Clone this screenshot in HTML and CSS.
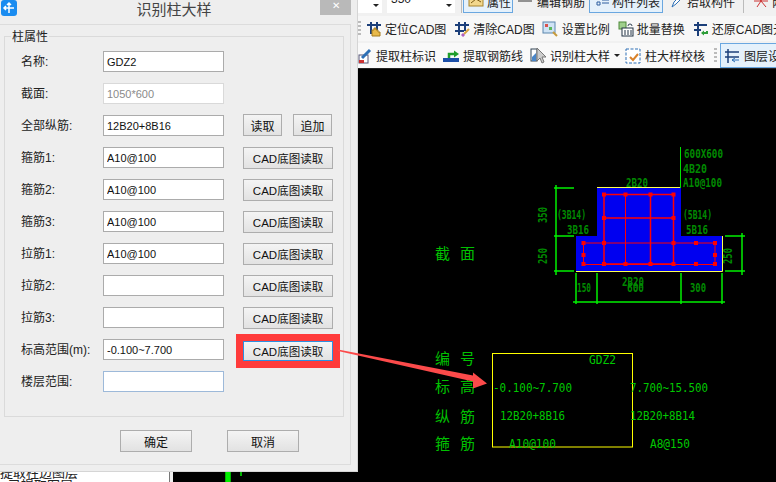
FILE: index.html
```html
<!DOCTYPE html>
<html lang="zh-CN">
<head>
<meta charset="UTF-8">
<title>识别柱大样</title>
<link rel="stylesheet" href="styles.css">
</head>
<body>
<div class="app">
    <div class="toolbars">
        <div class="bar bar-top">
            <span class="combo combo-a"><span class="combo-arrow"></span></span>
            <span class="combo combo-b">350<span class="combo-arrow"></span></span>
            <span class="sep"></span>
            <span class="tool tool-on tool-attr">
                <svg class="ico" viewBox="0 0 16 16"><rect x="1" y="3" width="14" height="10" fill="#f2d78c" stroke="#a8842c"/><path d="M3 10l5-4 5 3" stroke="#7a5a14" fill="none"/></svg>属性
            </span>
            <span class="tool tool-edit">
                <svg class="ico" viewBox="0 0 16 16"><path d="M1 8h14M4 5h9" stroke="#333" fill="none"/></svg>编辑钢筋
            </span>
            <span class="tool tool-on tool-list">
                <svg class="ico" viewBox="0 0 16 16"><path d="M2 3h3v3H2zM2 9h3v3H2zM7 4h7M7 7h7M7 10h7" stroke="#2f5f9f" fill="none"/></svg>构件列表
            </span>
            <span class="tool tool-pick">
                <svg class="ico" viewBox="0 0 16 16"><path d="M3 14l2-5 7-7 2 2-7 7z" fill="#fff" stroke="#2d6fb5"/></svg>拾取构件
            </span>
            <span class="sep sep-end"></span>
            <span class="tool tool-two">
                <svg class="ico" viewBox="0 0 16 16"><path d="M3 2l10 12M12 2L4 14M1 8h14" stroke="#c33" fill="none"/></svg>两点
            </span>
        </div>

        <div class="bar bar-cad">
            <span class="grip"></span>
            <span class="tool tool-a">
                <svg class="ico" viewBox="0 0 16 16"><path d="M5 1v12M11 1v12M1 4h14" stroke="#1c3f7a" stroke-width="2" fill="none"/><path d="M6 15V9h2V7h2v2h2v2h2v4z" fill="#e8b94a" stroke="#a67c1e"/></svg>定位CAD图
            </span>
            <span class="tool tool-b">
                <svg class="ico" viewBox="0 0 16 16"><path d="M5 1v13M11 1v9M1 4h14M1 10h9" stroke="#1c3f7a" stroke-width="2" fill="none"/><path d="M15 8l-5 5" stroke="#d9a441" stroke-width="2"/><path d="M10 13l-2 2" stroke="#b05fc0" stroke-width="3"/></svg>清除CAD图
            </span>
            <span class="tool tool-c">
                <svg class="ico" viewBox="0 0 16 16"><rect x="1" y="1" width="12" height="11" fill="#cfe3f5" stroke="#5b86ad"/><rect x="3" y="3" width="3" height="3" fill="#d9534f"/><rect x="7" y="6" width="3" height="3" fill="#5cb85c"/><path d="M11 11l4 4" stroke="#c89b3c" stroke-width="2"/></svg>设置比例
            </span>
            <span class="tool tool-d">
                <svg class="ico" viewBox="0 0 16 16"><rect x="1" y="1" width="7" height="7" fill="#9fcf8c" stroke="#4e8a3a"/><rect x="4" y="7" width="11" height="8" fill="#fff" stroke="#234"/><path d="M7 9v5M10 9v5M13 9v5" stroke="#234"/><path d="M10 5a2 2 0 0 1 4 0" fill="none" stroke="#345"/></svg>批量替换
            </span>
            <span class="tool tool-e">
                <svg class="ico" viewBox="0 0 16 16"><path d="M5 1v14M1 4h13M1 9h7" stroke="#1c3f7a" stroke-width="2" fill="none"/><path d="M9 12h5v-2" stroke="#2e9e3a" stroke-width="2" fill="none"/><path d="M11 9.500v5l-3-2.500z" fill="#2e9e3a"/></svg>还原CAD图元
            </span>
        </div>

        <div class="bar bar-column">
            <span class="tool tool-f">
                <svg class="ico" viewBox="0 0 16 16"><rect x="1" y="7" width="9" height="8" fill="#fff" stroke="#557"/><rect x="1" y="12" width="5" height="3" fill="#c33"/><path d="M4 10l8-8" stroke="#2d6fb5" stroke-width="3"/></svg>提取柱标识
            </span>
            <span class="tool tool-g">
                <svg class="ico" viewBox="0 0 16 16"><rect x="0" y="10" width="16" height="4" fill="#1c4fa8"/><path d="M6 10V6h6" stroke="#1f9e2c" stroke-width="2.500" fill="none"/><path d="M11 2.500L16 6l-5 3.500z" fill="#1f9e2c"/></svg>提取钢筋线
            </span>
            <span class="tool tool-h">
                <svg class="ico ico-cursor" viewBox="0 0 18 18"><rect x="1" y="2" width="6" height="12" fill="#fff" stroke="#345"/><path d="M2 10l4-4v8H2z" fill="#4a86c8"/><path d="M7 1l9 9h-4l2 5-2 1-2-5-3 3z" fill="#ccc" stroke="#777"/></svg>识别柱大样<span class="caret"></span>
            </span>
            <span class="tool tool-i">
                <svg class="ico" viewBox="0 0 16 16"><rect x="1" y="1" width="14" height="14" fill="#fff" stroke="#2d6fb5" stroke-dasharray="3 1.500"/><path d="M5 9l3 3 5-6" stroke="#d9822b" stroke-width="2" fill="none"/></svg>柱大样校核
            </span>
            <span class="grip grip-layer"></span>
            <span class="tool tool-on tool-layer">
                <svg class="ico" viewBox="0 0 16 16"><path d="M4 1v14M1 4h14M1 9h14" stroke="#1c3f7a" stroke-width="1.500" fill="none"/><path d="M15 12H8" stroke="#2d6fb5"/><path d="M11 10l-3 2 3 2" stroke="#2d6fb5" fill="none"/></svg>图层设置
            </span>
        </div>
    </div>

    <div class="workspace">
        <div class="side-panel">
            <div class="side-item">提取柱边图层</div>
            <div class="side-item side-indent">已提取图层</div>
        </div>
        <svg class="cad" viewBox="173 69 603 413" xmlns="http://www.w3.org/2000/svg">
            <!-- 柱截面 -->
            <path class="section" d="M597 188H681V236H723V271H576V236H597Z"/>
            <path class="outline" d="M597 187.500H681M722.500 236V271.500H576"/>
            <g class="rebar">
                <path class="rebar-main" d="M604 194.500H673.500V264H604ZM650.500 194.500V264M604 218H673.500"/>
                <path d="M625.500 194.500V264M583.500 243H715V264.500H583.500Z"/>
            </g>
            <g class="rebar-dots">
                <rect x="602" y="192.500" width="4" height="4"/><rect x="623.500" y="192.500" width="4" height="4"/>
                <rect x="648.500" y="192.500" width="4" height="4"/><rect x="671.500" y="192.500" width="4" height="4"/>
                <rect x="602" y="216" width="4" height="4"/><rect x="671.500" y="216" width="4" height="4"/>
                <rect x="581.500" y="241" width="4" height="4"/><rect x="602" y="241" width="4" height="4"/>
                <rect x="671.500" y="241" width="4" height="4"/><rect x="694" y="241" width="4" height="4"/>
                <rect x="713" y="241" width="4" height="4"/><rect x="581.500" y="253" width="4" height="4"/>
                <rect x="713" y="253" width="4" height="4"/><rect x="581.500" y="262" width="4" height="4"/>
                <rect x="602" y="262" width="4" height="4"/><rect x="623.500" y="262" width="4" height="4"/>
                <rect x="648.500" y="262" width="4" height="4"/><rect x="671.500" y="262" width="4" height="4"/>
                <rect x="694" y="262" width="4" height="4"/><rect x="713" y="262" width="4" height="4"/>
            </g>
            <path class="dim" d="M556 185V275M554 188H574M554 236H574M554 271H574M742 233V275M725 236H745M725 271H745M573 302H725M576 273V304M597 273V304M681 273V304M722 273V304"/>
            <path class="leader" d="M680.500 147V188"/>
            <g class="dim-text">
                <text x="684" y="158" textLength="39" lengthAdjust="spacingAndGlyphs">600X600</text>
                <text x="683" y="173" textLength="24" lengthAdjust="spacingAndGlyphs">4B20</text>
                <text x="683" y="187" textLength="39" lengthAdjust="spacingAndGlyphs">A10@100</text>
                <text x="626" y="187" textLength="22" lengthAdjust="spacingAndGlyphs">2B20</text>
                <text x="557" y="219" textLength="29" lengthAdjust="spacingAndGlyphs">(3B14)</text>
                <text x="567" y="234" textLength="22" lengthAdjust="spacingAndGlyphs">3B16</text>
                <text x="683" y="219" textLength="29" lengthAdjust="spacingAndGlyphs">(5B14)</text>
                <text x="686" y="234" textLength="22" lengthAdjust="spacingAndGlyphs">5B16</text>
                <text x="577" y="292" textLength="14" lengthAdjust="spacingAndGlyphs">150</text>
                <text x="622" y="286" textLength="22" lengthAdjust="spacingAndGlyphs">2B20</text>
                <text x="627" y="292" textLength="17" lengthAdjust="spacingAndGlyphs">600</text>
                <text x="690" y="292" textLength="16" lengthAdjust="spacingAndGlyphs">300</text>
                <text transform="translate(547 223) rotate(-90)" textLength="16" lengthAdjust="spacingAndGlyphs">350</text>
                <text transform="translate(547 264) rotate(-90)" textLength="16" lengthAdjust="spacingAndGlyphs">250</text>
                <text transform="translate(732 264) rotate(-90)" textLength="16" lengthAdjust="spacingAndGlyphs">250</text>
            </g>
            <!-- 柱表 -->
            <g class="row-head">
                <text x="435" y="259">截</text><text x="460" y="259">面</text>
                <text x="435" y="364">编</text><text x="460" y="364">号</text>
                <text x="435" y="392">标</text><text x="460" y="392">高</text>
                <text x="435" y="422">纵</text><text x="460" y="422">筋</text>
                <text x="435" y="449">箍</text><text x="460" y="449">筋</text>
            </g>
            <rect class="table-box" x="492.500" y="353.500" width="140" height="93.500"/>
            <g class="table-text">
                <text x="589" y="364" textLength="27" lengthAdjust="spacingAndGlyphs">GDZ2</text>
                <text x="493" y="392" textLength="79" lengthAdjust="spacingAndGlyphs">-0.100~7.700</text>
                <text x="630" y="392" textLength="78" lengthAdjust="spacingAndGlyphs">7.700~15.500</text>
                <text x="500" y="420" textLength="65" lengthAdjust="spacingAndGlyphs">12B20+8B16</text>
                <text x="630" y="420" textLength="65" lengthAdjust="spacingAndGlyphs">12B20+8B14</text>
                <text x="509" y="448" textLength="47" lengthAdjust="spacingAndGlyphs">A10@100</text>
                <text x="650" y="448" textLength="40" lengthAdjust="spacingAndGlyphs">A8@150</text>
            </g>
            <path class="dim" d="M226 472H230V482H226ZM241 472V476"/>
        </svg>
    </div>
</div>

<div class="dialog">
    <div class="dialog-title">
        <span class="dialog-icon">
            <svg viewBox="0 0 16 16" width="16" height="16"><rect width="16" height="16" rx="3" fill="#1a8cf0"/><path d="M8 3v10M3 8h10M6 5l2-2 2 2M5 6L3 8l2 2" fill="none" stroke="#fff" stroke-width="1.500"/></svg>
        </span>
        <span class="dialog-name">识别柱大样</span>
        <span class="dialog-close">✕</span>
    </div>
    <div class="dialog-body">
        <fieldset class="group">
            <legend>柱属性</legend>
            <div class="group-rows">
                <div class="form-row"><label>名称:</label><input class="field field-name" type="text" value="GDZ2"></div>
                <div class="form-row"><label>截面:</label><input class="field" type="text" value="1050*600" disabled></div>
                <div class="form-row"><label>全部纵筋:</label><input class="field" type="text" value="12B20+8B16"><button class="btn btn-small">读取</button><button class="btn btn-small">追加</button></div>
                <div class="form-row"><label>箍筋1:</label><input class="field" type="text" value="A10@100"><button class="btn btn-cad">CAD底图读取</button></div>
                <div class="form-row"><label>箍筋2:</label><input class="field" type="text" value="A10@100"><button class="btn btn-cad">CAD底图读取</button></div>
                <div class="form-row"><label>箍筋3:</label><input class="field" type="text" value="A10@100"><button class="btn btn-cad">CAD底图读取</button></div>
                <div class="form-row"><label>拉筋1:</label><input class="field" type="text" value="A10@100"><button class="btn btn-cad">CAD底图读取</button></div>
                <div class="form-row"><label>拉筋2:</label><input class="field" type="text"><button class="btn btn-cad">CAD底图读取</button></div>
                <div class="form-row"><label>拉筋3:</label><input class="field" type="text"><button class="btn btn-cad">CAD底图读取</button></div>
                <div class="form-row"><label>标高范围(m):</label><input class="field" type="text" value="-0.100~7.700"><button class="btn btn-cad btn-focus">CAD底图读取</button></div>
                <div class="form-row"><label>楼层范围:</label><input class="field field-hover" type="text"></div>
            </div>
        </fieldset>
        <div class="dialog-actions">
            <button class="btn btn-action">确定</button>
            <button class="btn btn-action">取消</button>
        </div>
    </div>
</div>

<div class="mark-box"></div>
<svg class="mark-arrow" viewBox="0 0 776 482" xmlns="http://www.w3.org/2000/svg">
    <path d="M338 349.500L473 375.500L473 372.500L487 383.500L473 388.500L473 381.500L338 351Z"/>
</svg>
</body>
</html>
```

FILE: styles.css
```css
* {
    box-sizing: border-box;
}
html, body {
    margin: 0;
    height: 100%;
    overflow: hidden;
}
body {
    position: relative;
    width: 776px;
    height: 482px;
    font-family: "Liberation Sans", "Noto Sans CJK SC", sans-serif;
    font-size: 12px;
    color: #222;
    background-color: #f0f0f0;
}
.app {
    display: flex;
    flex-direction: column;
    height: 100%;
}

/* toolbars */
.toolbars {
    flex: none;
    height: 69px;
    display: flex;
    flex-direction: column;
    padding-left: 358px;
    background-color: #f1f1f1;
    font-size: 12px;
    white-space: nowrap;
    overflow: hidden;
}
.bar {
    display: flex;
    align-items: center;
    flex: none;
    overflow: hidden;
}
.bar-top {
    height: 13px;
    margin-bottom: 3px;
    align-items: flex-end;
}
.bar-cad {
    height: 25px;
    background-color: #f7f7f7;
    margin-bottom: 2px;
}
.bar-column {
    height: 26px;
    background-color: #f9f9f9;
    border-bottom: 1px solid #222;
}
.tool {
    display: flex;
    align-items: center;
    flex: none;
    gap: 3px;
    height: 24px;
}
.ico {
    width: 16px;
    height: 16px;
    flex: none;
}
.ico-cursor {
    width: 18px;
    height: 18px;
}
.tool-on {
    background-color: #e5f1fb;
    border: 1px solid #6aa7e0;
}
.combo {
    position: relative;
    flex: none;
    height: 24px;
    background-color: #fff;
    line-height: 20px;
    padding-left: 4px;
}
.combo-a {
    width: 24px;
}
.combo-b {
    width: 68px;
    margin-left: 5px;
}
.combo-arrow {
    position: absolute;
    right: 3px;
    bottom: 6px;
    border: 3px solid transparent;
    border-top-color: #222;
    border-bottom: 0;
}
.sep {
    flex: none;
    width: 1px;
    height: 20px;
    margin-left: 6px;
    background-color: #bbb;
}
.sep-end {
    margin-left: 8px;
}
.tool-attr {
    width: 50px;
    margin-left: 1px;
    padding-left: 4px;
}
.tool-edit {
    margin-left: 4px;
    gap: 4px;
}
.tool-list {
    margin-left: 4px;
    width: 74px;
    padding-left: 5px;
    gap: 1px;
}
.tool-pick {
    margin-left: 6px;
    gap: 2px;
}
.tool-two {
    margin-left: 9px;
}
.grip {
    flex: none;
    width: 3px;
    height: 16px;
    background: repeating-linear-gradient(#bbb 0 2px, transparent 2px 4px);
}
.tool-a {
    margin-left: 5px;
}
.tool-b {
    margin-left: 8px;
}
.tool-c {
    margin-left: 7px;
    gap: 4px;
}
.tool-d {
    margin-left: 8px;
}
.tool-e {
    margin-left: 8px;
}
.tool-f {
    gap: 2px;
}
.tool-g {
    margin-left: 7px;
    gap: 4px;
}
.tool-h {
    margin-left: 7px;
    gap: 2px;
}
.tool-i {
    margin-left: 5px;
    gap: 4px;
}
.caret {
    margin-left: 2px;
    border: 3px solid transparent;
    border-top-color: #222;
    border-bottom: 0;
}
.grip-layer {
    margin-left: 9px;
}
.tool-layer {
    margin-left: 3px;
    padding-left: 3px;
    height: 25px;
    gap: 4px;
    flex: none;
}

/* workspace */
.workspace {
    flex: 1;
    display: flex;
    min-height: 0;
}
.side-panel {
    flex: none;
    width: 170px;
    padding-top: 397px;
    background-color: #fff;
    border-right: 1px solid #777;
    font-size: 13px;
    line-height: 13px;
    overflow: hidden;
}
.side-indent {
    padding-left: 8px;
}
.cad {
    flex: none;
    width: 603px;
    height: 413px;
    margin-left: 3px;
    background-color: #000;
}
.section {
    fill: #0000f0;
}
.outline {
    fill: none;
    stroke: #ffff50;
    stroke-width: 1;
}
.rebar {
    fill: none;
    stroke: #f00;
    stroke-width: 1;
}
.rebar-main {
    stroke-width: 1.5;
}
.rebar-dots {
    fill: #f00;
}
.dim {
    fill: #00f000;
    stroke: #00f000;
    stroke-width: 1.5;
}
.leader {
    stroke: #00e000;
    stroke-width: 1;
}
.dim-text {
    fill: #008a00;
    font-family: "DejaVu Sans Mono", monospace;
    font-size: 13px;
    font-weight: bold;
}
.row-head {
    fill: #00c000;
    font-family: "Noto Sans CJK SC", sans-serif;
    font-size: 15px;
}
.table-box {
    fill: none;
    stroke: #ffff00;
    stroke-width: 1;
}
.table-text {
    fill: #00c800;
    font-family: "DejaVu Sans Mono", monospace;
    font-size: 12px;
}

/* dialog */
.dialog {
    position: absolute;
    left: 0;
    top: 0;
    width: 358px;
    height: 472px;
    background-color: #eeeeee;
    border-right: 1px solid #d5d5d5;
    border-bottom: 1px solid #d5d5d5;
}
.dialog-title {
    position: relative;
    display: flex;
    justify-content: center;
    height: 24px;
    font-size: 15px;
    line-height: 19px;
    color: #444;
}
.dialog-icon {
    position: absolute;
    left: 1px;
    top: 0;
}
.dialog-name {
    margin-left: -9px;
}
.dialog-close {
    position: absolute;
    right: 6px;
    top: 0;
    width: 31px;
    height: 15px;
    background-color: #b9b9b9;
    color: #fff;
    font-size: 10px;
    line-height: 12px;
    text-align: center;
}
.dialog-body {
    width: 351px;
    height: 441px;
    padding: 4px 6px 0 4px;
    border: 1px solid #dcdcdc;
    border-left: 0;
}
.group {
    width: 340px;
    height: 388px;
    margin: 0;
    padding: 0;
    border: 1px solid #dadada;
}
.group legend {
    margin-left: 6px;
    padding: 0 1px;
    font-size: 12px;
    line-height: 17px;
    height: 14px;
}
.group-rows {
    padding: 8px 0 0 16px;
}
.form-row {
    display: flex;
    align-items: flex-start;
    height: 21px;
    margin-bottom: 11px;
}
.form-row label {
    flex: none;
    width: 82px;
    line-height: 23px;
}
.field {
    flex: none;
    width: 121px;
    height: 21px;
    padding: 0 3px;
    background-color: #fff;
    border: 1px solid #ababab;
    font-family: "Liberation Sans", sans-serif;
    font-size: 11px;
    color: #111;
    border-radius: 0;
    outline: none;
}
.field:disabled {
    border-color: #d9d9d9;
    color: #8a8a8a;
}
.field-hover {
    border-color: #9db9d9;
}
.btn {
    flex: none;
    padding: 0;
    background: linear-gradient(#f4f4f4, #e2e2e2);
    border: 1px solid #adadad;
    border-radius: 0;
    font-family: "Liberation Sans", "Noto Sans CJK SC", sans-serif;
    font-size: 12px;
    color: #111;
}
.btn-small {
    width: 39px;
    height: 22px;
    margin: -1px 0 0 19px;
}
.btn-small + .btn-small {
    margin-left: 11px;
}
.btn-cad {
    width: 90px;
    height: 22px;
    margin-left: 19px;
    font-size: 11.5px;
}
.btn-focus {
    margin-top: 2px;
    height: 20px;
    border: 1px solid #2d8fe0;
}
.dialog-actions {
    display: flex;
    gap: 35px;
    padding: 13px 0 0 116px;
}
.btn-action {
    width: 72px;
    height: 22px;
    font-size: 12px;
}

/* red marks over the screenshot */
.mark-box {
    position: absolute;
    left: 236px;
    top: 334px;
    width: 104px;
    height: 34px;
    border: 7px solid #ff3b3b;
}
.mark-arrow {
    position: absolute;
    left: 0;
    top: 0;
    width: 776px;
    height: 482px;
    fill: #fc4a4a;
    pointer-events: none;
}
```
